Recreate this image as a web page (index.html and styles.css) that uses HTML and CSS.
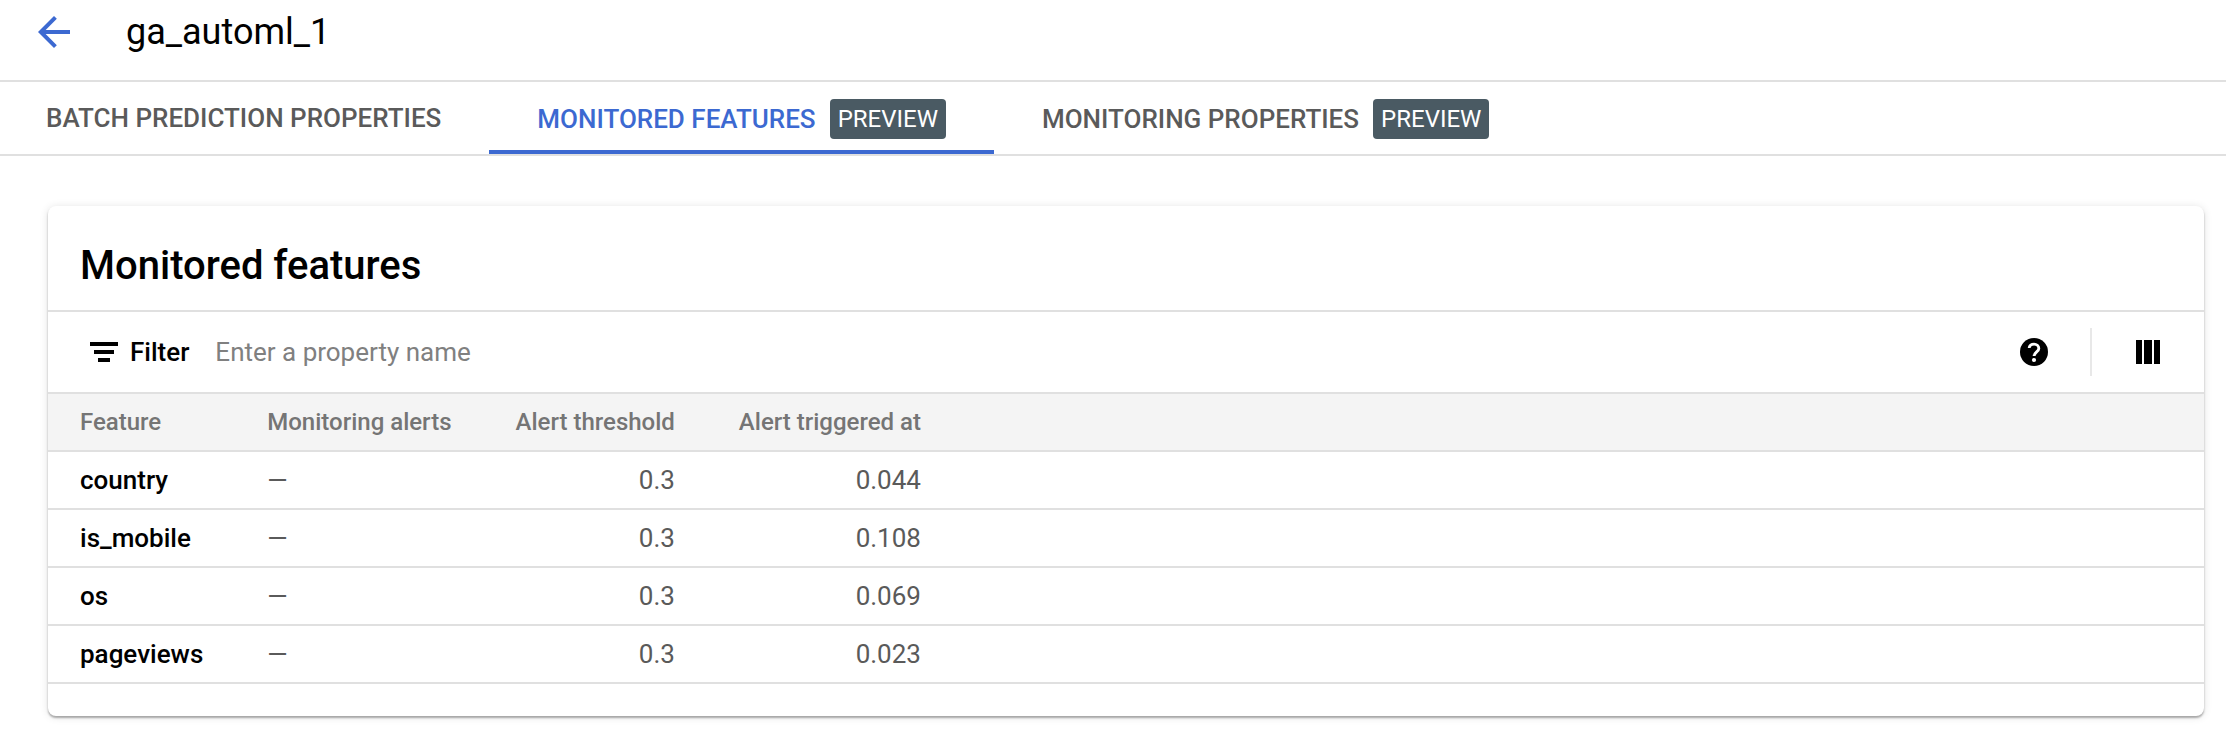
FILE: index.html
```html
<!DOCTYPE html>
<html lang="en">
<head>
<meta charset="utf-8">
<title>ga_automl_1</title>
<link rel="stylesheet" href="styles.css">
</head>
<body>
<header class="page-header">
  <button class="icon-button back" type="button" aria-label="Back">
    <svg class="icon" viewBox="0 0 24 24" aria-hidden="true"><path d="M20 11H7.83l5.59-5.59L12 4l-8 8 8 8 1.41-1.41L7.83 13H20z"/></svg>
  </button>
  <h1 class="page-title">ga_automl_1</h1>
</header>
<nav class="tabs">
  <a class="tab" href="#batch">BATCH PREDICTION PROPERTIES</a>
  <a class="tab tab-badged tab-active" href="#features" aria-current="page">MONITORED FEATURES <span class="badge">PREVIEW</span></a>
  <a class="tab tab-badged" href="#monitoring">MONITORING PROPERTIES <span class="badge">PREVIEW</span></a>
</nav>
<main class="content">
  <section class="card">
    <h2 class="card-title">Monitored features</h2>
    <div class="toolbar">
      <label class="filter-label" for="filter">
        <svg class="icon" viewBox="0 0 36 36" aria-hidden="true"><path d="M4 8h28v4H4zM8 16h20v4H8zM12 24h12v4H12z"/></svg>
        Filter
      </label>
      <input class="filter-input" id="filter" type="text" placeholder="Enter a property name">
      <button class="icon-button help" type="button" aria-label="Help">
        <svg class="icon-small" viewBox="0 0 28 28" aria-hidden="true"><circle cx="14" cy="14" r="14"/><path class="help-stroke" d="M9.2 10C9.3 7.6 11.4 6.1 14 6.1s4.8 1.8 4.8 4.3c0 3.3-4.7 3.7-4.7 7.7"/><circle class="help-dot" cx="14" cy="22" r="2.1"/></svg>
      </button>
      <button class="icon-button columns" type="button" aria-label="Column display options">
        <svg class="icon-small" viewBox="0 0 28 28" aria-hidden="true"><path d="M2 2h6v24H2zM10 2h8v24h-8zM20 2h6v24h-6z"/></svg>
      </button>
    </div>
    <table class="table">
      <thead>
        <tr><th scope="col">Feature</th><th scope="col">Monitoring alerts</th><th class="num" scope="col">Alert threshold</th><th class="num" scope="col">Alert triggered at</th><td class="fill"></td></tr>
      </thead>
      <tbody>
        <tr><th scope="row">country</th><td>—</td><td class="num">0.3</td><td class="num">0.044</td><td class="fill"></td></tr>
        <tr><th scope="row">is_mobile</th><td>—</td><td class="num">0.3</td><td class="num">0.108</td><td class="fill"></td></tr>
        <tr><th scope="row">os</th><td>—</td><td class="num">0.3</td><td class="num">0.069</td><td class="fill"></td></tr>
        <tr><th scope="row">pageviews</th><td>—</td><td class="num">0.3</td><td class="num">0.023</td><td class="fill"></td></tr>
      </tbody>
    </table>
  </section>
</main>
</body>
</html>
```
FILE: styles.css
```css
* {
  box-sizing: border-box;
}

body {
  margin: 0;
  background: #fff;
  color: #000;
  font-family: Roboto, "Liberation Sans", sans-serif;
  font-size: 26px;
  line-height: 32px;
}

.icon {
  display: block;
  width: 36px;
  height: 36px;
}

.icon-small {
  display: block;
  width: 28px;
  height: 28px;
}

.icon-button {
  display: flex;
  align-items: center;
  justify-content: center;
  padding: 0;
  border: 0;
  background: none;
  color: inherit;
  fill: currentColor;
}

.page-header {
  display: flex;
  align-items: center;
  gap: 50px;
  padding: 10px 32px 26px;
  border-bottom: 2px solid #e0e0e0;
}

.page-title {
  margin: 0;
  font-size: 36px;
  line-height: 44px;
  font-weight: 400;
}

.back {
  width: 44px;
  height: 44px;
  color: #3c69d1;
}

.back .icon {
  width: 48px;
  height: 48px;
  flex: none;
}

.tabs {
  display: flex;
  border-bottom: 2px solid #e0e0e0;
}

.tab {
  display: flex;
  align-items: center;
  gap: 14px;
  height: 72px;
  padding: 4px 48px 0;
  border-bottom: 4px solid transparent;
  color: #5a5a5a;
  font-weight: 500;
  text-decoration: none;
  white-space: nowrap;
}

.tab:first-child {
  padding-left: 46px;
}

.tab-badged {
  padding-top: 6px;
}

.tab-active {
  border-color: #3c69d1;
  color: #3c69d1;
}

.badge {
  padding: 4px 8px;
  border-radius: 4px;
  background: #4a5a63;
  color: #fff;
  font-size: 24px;
  font-weight: 400;
}

.content {
  padding: 50px 22px 32px 48px;
}

.card {
  padding-bottom: 32px;
  border-radius: 8px;
  background: #fff;
  box-shadow: 0 2px 2px rgba(0, 0, 0, 0.3), 0 1px 8px rgba(0, 0, 0, 0.12);
}

.card-title {
  margin: 0;
  padding: 36px 32px 20px;
  border-bottom: 2px solid #e0e0e0;
  font-size: 40px;
  line-height: 48px;
  font-weight: 500;
}

.toolbar {
  display: flex;
  align-items: center;
  height: 82px;
  padding: 0 42px 0 38px;
  border-bottom: 2px solid #e0e0e0;
}

.filter-label {
  display: flex;
  align-items: center;
  gap: 8px;
  font-weight: 500;
}

.filter-input {
  flex: 1;
  min-width: 0;
  margin-left: 26px;
  padding: 0;
  border: 0;
  outline: 0;
  background: none;
  color: #000;
  font: inherit;
}

.filter-input::placeholder {
  color: #808080;
  opacity: 1;
}

.help {
  height: 48px;
  padding-right: 42px;
  border-right: 2px solid #e8e8e8;
}

.help-stroke {
  fill: none;
  stroke: #fff;
  stroke-width: 2.9;
}

.help-dot {
  fill: #fff;
}

.columns {
  height: 48px;
  padding-left: 42px;
}

.table {
  width: 100%;
  border-collapse: separate;
  border-spacing: 0;
}

.table th,
.table td {
  height: 58px;
  padding: 0 32px;
  border-bottom: 2px solid #e0e0e0;
  color: #5a5a5a;
  font-weight: 400;
  text-align: left;
  white-space: nowrap;
}

.table thead th,
.table thead td {
  background: #f4f4f4;
  color: #757575;
  font-size: 24px;
  font-weight: 500;
}

.table tbody th {
  color: #000;
  font-weight: 500;
}

.table .num {
  text-align: right;
}

.table .fill {
  width: 100%;
  padding: 0;
}
```
